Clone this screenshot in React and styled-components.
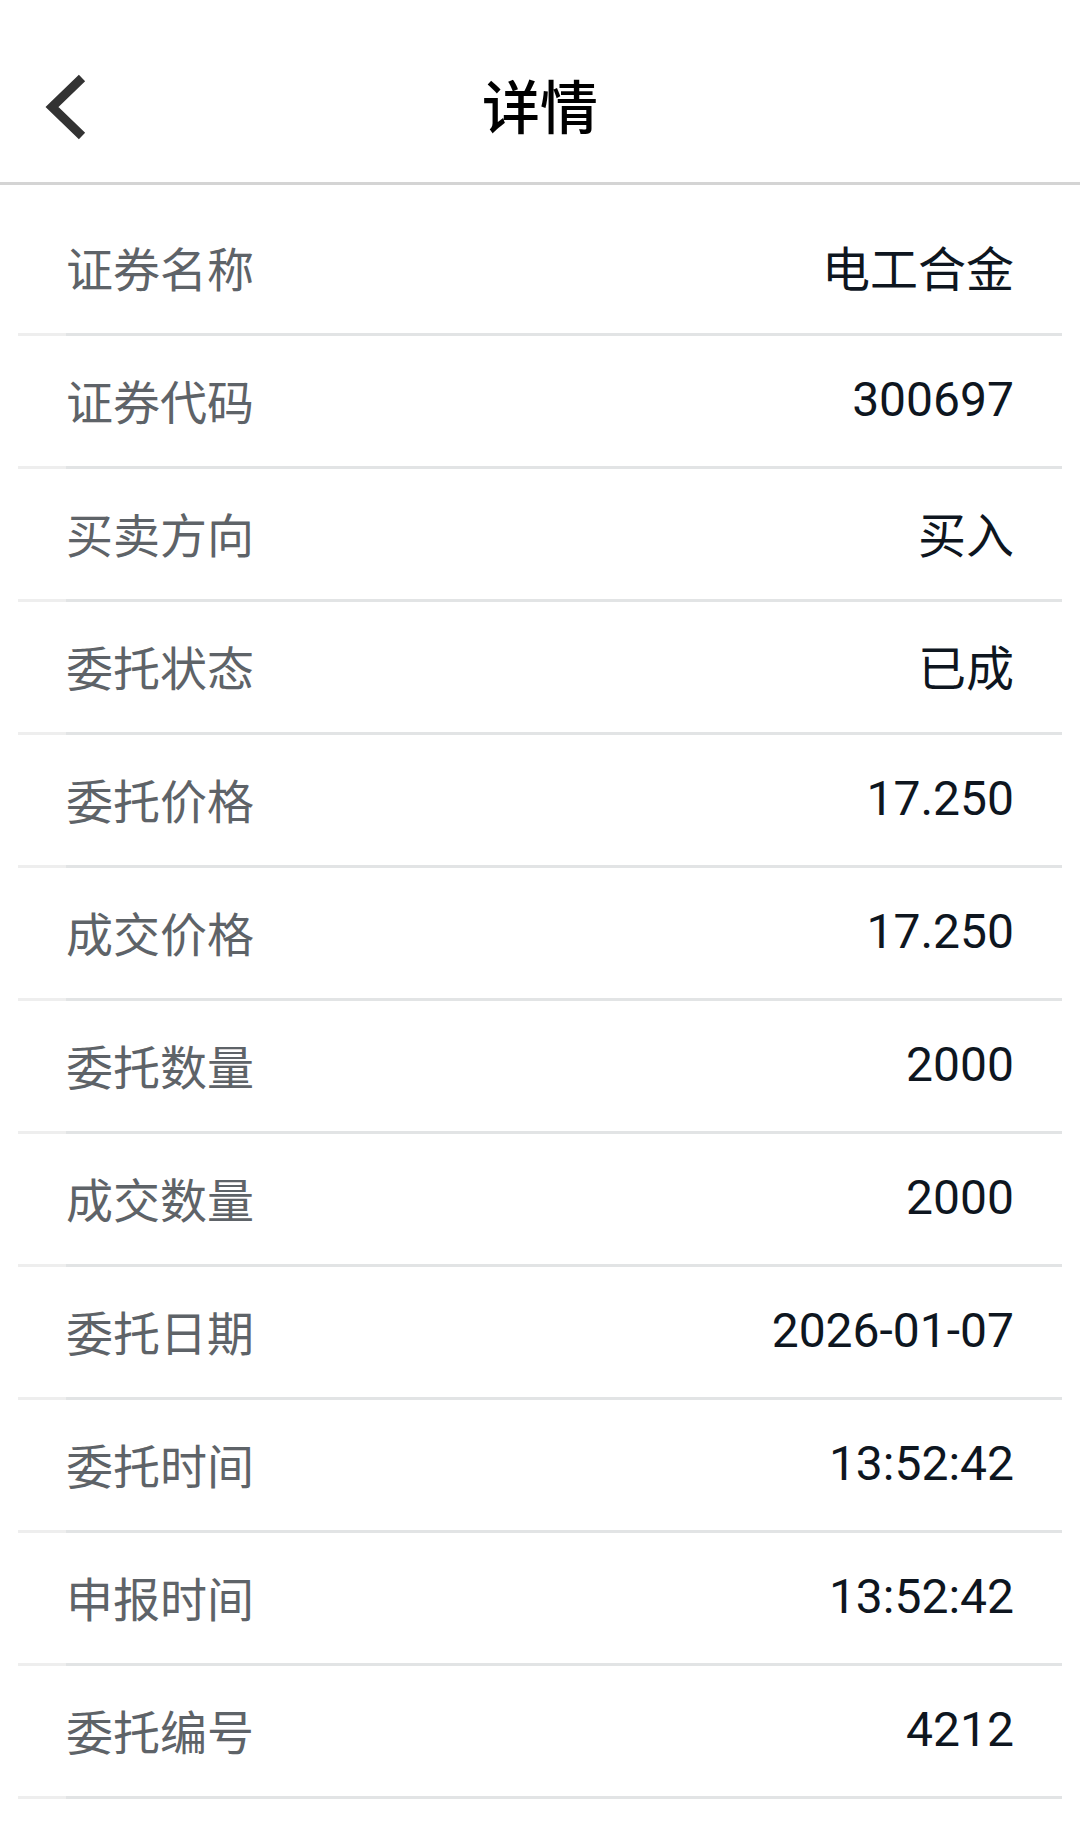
import styled, { createGlobalStyle } from 'styled-components';

const GlobalStyle = createGlobalStyle`
  html, body {
    margin: 0;
    padding: 0;
    background: #ffffff;
  }
  body {
    font-family: Roboto, "Noto Sans CJK SC", sans-serif;
  }
`

const Page = styled.div`
  width: 1080px;
  min-height: 1843px;
  background: #ffffff;
  overflow: hidden;
`

const Header = styled.div`
  height: 156px;
  padding-top: 26px;
  border-bottom: 3px solid #d4d4d4;
  display: grid;
  grid-template-columns: 160px 1fr 160px;
  align-items: center;
`

const BackButton = styled.div`
  display: flex;
  align-items: center;
  padding-left: 40px;
  height: 100%;
`

const Title = styled.div`
  text-align: center;
  font-family: "Noto Sans CJK SC", sans-serif;
  font-size: 58px;
  font-weight: 500;
  color: #000000;
  line-height: 1;
`

const List = styled.div`
  padding: 18px 18px 0;
`

const Row = styled.div`
  height: 126px;
  padding: 0 48px 4px;
  display: flex;
  align-items: center;
  justify-content: space-between;
  border-bottom: 3px solid transparent;
  background:
    linear-gradient(to right, #eeeeee 48px, #e2e4e5 48px) bottom / 100% 3px no-repeat;
  background-origin: border-box;
`

const Label = styled.span`
  font-family: "Noto Sans CJK SC", sans-serif;
  font-size: 47px;
  color: #5e6368;
`

const Value = styled.span`
  font-family: Roboto, "Noto Sans CJK SC", sans-serif;
  font-size: 48px;
  color: #0e161f;
`

const rows = [
  ['证券名称', '电工合金'],
  ['证券代码', '300697'],
  ['买卖方向', '买入'],
  ['委托状态', '已成'],
  ['委托价格', '17.250'],
  ['成交价格', '17.250'],
  ['委托数量', '2000'],
  ['成交数量', '2000'],
  ['委托日期', '2026-01-07'],
  ['委托时间', '13:52:42'],
  ['申报时间', '13:52:42'],
  ['委托编号', '4212'],
  ['委托类型', '限价'],
]

const App = () => {
  return (
    <Page>
      <GlobalStyle />
      <Header>
        <BackButton>
          <svg width="60" height="80" viewBox="0 0 60 80">
            <polyline
              points="42,14 12,43 42,72"
              fill="none"
              stroke="#333333"
              strokeWidth="9"
              strokeLinejoin="miter"
            />
          </svg>
        </BackButton>
        <Title>详情</Title>
        <div />
      </Header>
      <List>
        {rows.map(([label, value]) => (
          <Row key={label}>
            <Label>{label}</Label>
            <Value>{value}</Value>
          </Row>
        ))}
      </List>
    </Page>
  )
}

export default App
